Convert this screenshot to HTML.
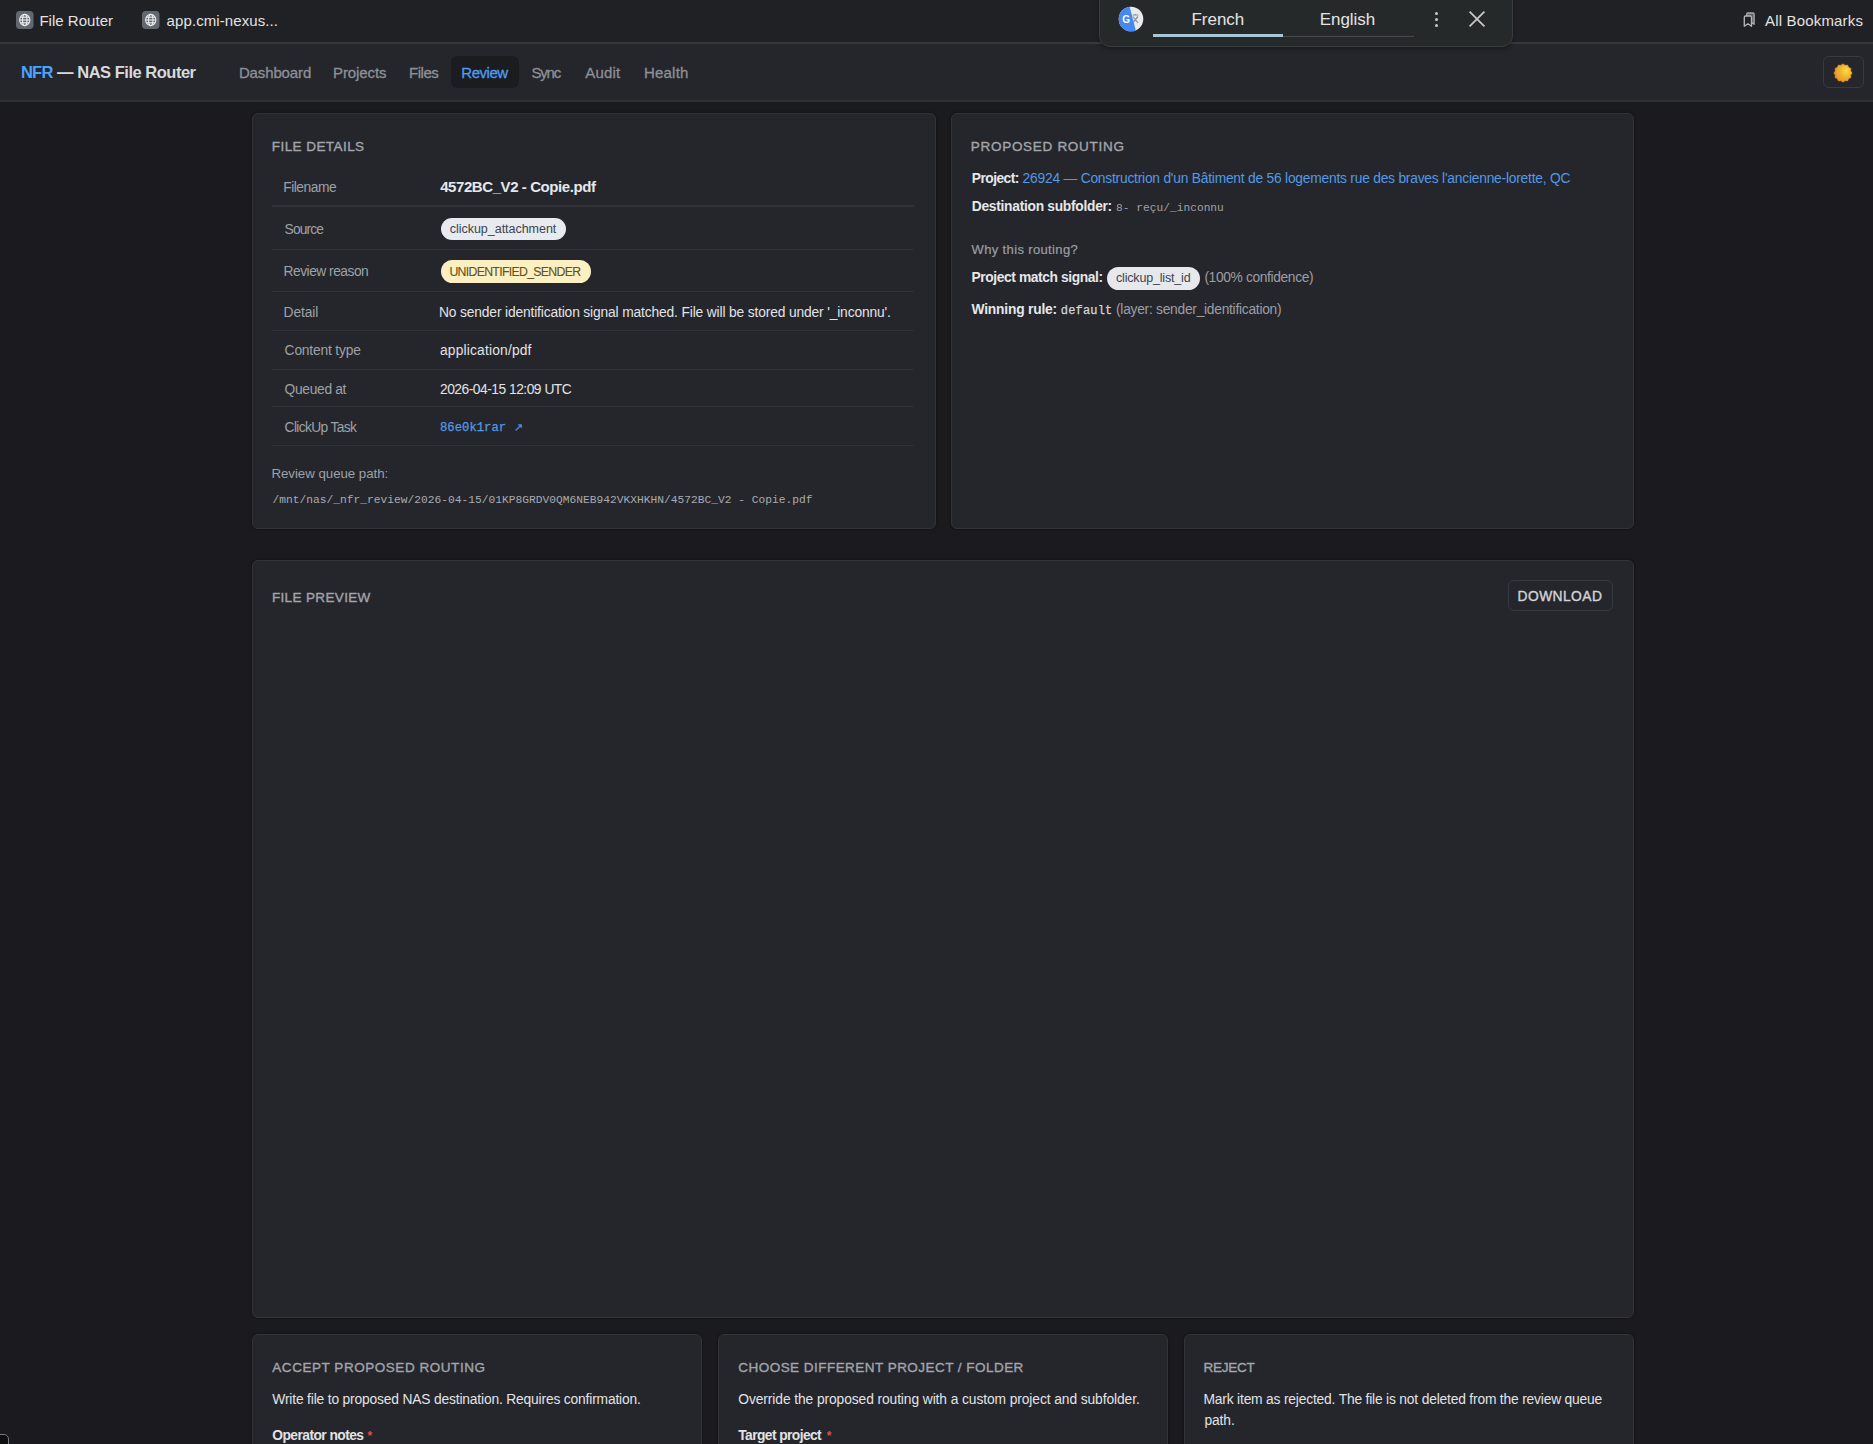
<!DOCTYPE html>
<html><head><meta charset="utf-8">
<style>
*{box-sizing:border-box;margin:0;padding:0}
html,body{width:1873px;height:1444px;overflow:hidden;background:#1b1a1f;font-family:"Liberation Sans",sans-serif;color:#e4e5e8}
.a{position:absolute}
.t{position:absolute;white-space:nowrap}
.card{position:absolute;background:#25262b;border:1.25px solid #323339;border-radius:6px;box-shadow:0 0 3px rgba(0,0,0,.45)}
.sep{position:absolute;left:272px;width:642px;height:1.25px;background:#313238}
.pill{position:absolute;border-radius:12px}
</style></head><body>
<!-- bookmarks bar -->
<div class="a" style="left:0;top:0;width:1873px;height:42px;background:#202124"></div>
<div class="a" style="left:0;top:42px;width:1873px;height:1.6px;background:#38393d"></div>
<svg class="a" style="left:16px;top:11px" width="17.5" height="18" viewBox="0 0 19 18" preserveAspectRatio="none">
  <rect x="0" y="0" width="19" height="18" rx="4" fill="#626870"/>
  <g fill="none" stroke="#f1f1f1" stroke-width="1.1">
    <circle cx="9.5" cy="9" r="5.6"/>
    <ellipse cx="9.5" cy="9" rx="2.4" ry="5.6"/>
    <line x1="3.9" y1="9" x2="15.1" y2="9"/>
    <line x1="4.6" y1="6.2" x2="14.4" y2="6.2"/>
    <line x1="4.6" y1="11.8" x2="14.4" y2="11.8"/>
  </g>
</svg>
<svg class="a" style="left:142.3px;top:11px" width="17.5" height="18" viewBox="0 0 19 18" preserveAspectRatio="none">
  <rect x="0" y="0" width="19" height="18" rx="4" fill="#626870"/>
  <g fill="none" stroke="#f1f1f1" stroke-width="1.1">
    <circle cx="9.5" cy="9" r="5.6"/>
    <ellipse cx="9.5" cy="9" rx="2.4" ry="5.6"/>
    <line x1="3.9" y1="9" x2="15.1" y2="9"/>
    <line x1="4.6" y1="6.2" x2="14.4" y2="6.2"/>
    <line x1="4.6" y1="11.8" x2="14.4" y2="11.8"/>
  </g>
</svg>
<svg class="a" style="left:1742px;top:12px" width="14" height="16" viewBox="0 0 14 16">
  <path d="M4.7 4 V2.2 Q4.7 1 5.9 1 H11 Q12.1 1 12.1 2.2 V12.3 L9.6 10.6" fill="#5f6063" stroke="#a9abae" stroke-width="1.35" stroke-linejoin="round"/>
  <path d="M3.5 4 H8.3 Q9.5 4 9.5 5.2 V14.2 L5.9 11.8 L2.3 14.2 V5.2 Q2.3 4 3.5 4 Z" fill="#202124" stroke="#b3b5b8" stroke-width="1.35" stroke-linejoin="round"/>
</svg>
<!-- nav -->
<div class="a" style="left:0;top:43.6px;width:1873px;height:56.4px;background:#25262b"></div>
<div class="a" style="left:0;top:100px;width:1873px;height:1.8px;background:#2f3035"></div>
<div class="a" style="left:451px;top:56px;width:67.5px;height:32px;border-radius:6px;background:#1b1c20"></div>
<div class="a" style="left:1822.5px;top:56.2px;width:41px;height:31.8px;border-radius:6px;border:1.2px solid #393a40"></div>
<svg class="a" style="left:1833px;top:63px" width="20" height="20" viewBox="0 0 20 20">
  <defs><radialGradient id="sg" cx="0.68" cy="0.38" r="0.75"><stop offset="0" stop-color="#ffd93f"/><stop offset="0.55" stop-color="#e9ad2e"/><stop offset="1" stop-color="#f3862a"/></radialGradient></defs>
  <polygon points="10.00,0.80 12.07,2.27 14.60,2.03 15.66,4.34 17.97,5.40 17.73,7.93 19.20,10.00 17.73,12.07 17.97,14.60 15.66,15.66 14.60,17.97 12.07,17.73 10.00,19.20 7.93,17.73 5.40,17.97 4.34,15.66 2.03,14.60 2.27,12.07 0.80,10.00 2.27,7.93 2.03,5.40 4.34,4.34 5.40,2.03 7.93,2.27" fill="url(#sg)" stroke="#f08a2a" stroke-width="0.5" stroke-linejoin="round"/>
</svg>
<!-- translate popup -->
<div class="a" style="left:1099px;top:-12px;width:414px;height:58.5px;background:#26292a;border:1.3px solid #393b3d;border-radius:11px;box-shadow:0 2px 4px rgba(0,0,0,.35)"></div>
<svg class="a" style="left:1118px;top:6px" width="26" height="26" viewBox="0 0 26 26">
  <defs><clipPath id="gc"><circle cx="13" cy="13" r="12.3"/></clipPath></defs>
  <g clip-path="url(#gc)">
    <rect x="0" y="0" width="26" height="26" fill="#e9eaec"/>
    <path d="M0 0 H11.5 L18.2 26 H0 Z" fill="#4688f2"/>
  </g>
  <text x="8.2" y="17.2" font-family="Liberation Sans" font-weight="bold" font-size="10" fill="#ffffff" text-anchor="middle">G</text>
  <g stroke="#8a8d91" stroke-width="1.2" fill="none"><path d="M14.5 9 H20.5 M17.5 8 V9.5 M15 10.5 L20 17 M20 10.5 L15.5 16"/></g>
</svg>
<div class="a" style="left:1153px;top:34.3px;width:130px;height:3px;background:#a8c7d6"></div>
<div class="a" style="left:1283px;top:35.5px;width:131px;height:1px;background:#47494c"></div>
<div class="a" style="left:1435.3px;top:12.3px;width:3px;height:3px;border-radius:50%;background:#c7c8ca"></div>
<div class="a" style="left:1435.3px;top:18.1px;width:3px;height:3px;border-radius:50%;background:#c7c8ca"></div>
<div class="a" style="left:1435.3px;top:23.7px;width:3px;height:3px;border-radius:50%;background:#c7c8ca"></div>
<svg class="a" style="left:1468px;top:10px" width="18" height="18" viewBox="0 0 18 18">
  <path d="M1.6 1.6 L16.4 16.4 M16.4 1.6 L1.6 16.4" stroke="#c6c7c9" stroke-width="1.8"/>
</svg>
<!-- cards -->
<div class="card" style="left:252px;top:113px;width:684px;height:416px"></div>
<div class="card" style="left:951px;top:113px;width:683px;height:416px"></div>
<div class="card" style="left:252px;top:560px;width:1382px;height:758px"></div>
<div class="card" style="left:252px;top:1334px;width:450px;height:200px"></div>
<div class="card" style="left:718px;top:1334px;width:450px;height:200px"></div>
<div class="card" style="left:1183.5px;top:1334px;width:450.5px;height:200px"></div>
<!-- separators -->
<div class="sep" style="top:205.4px"></div>
<div class="sep" style="top:248.8px"></div>
<div class="sep" style="top:291.2px"></div>
<div class="sep" style="top:330px"></div>
<div class="sep" style="top:368.6px"></div>
<div class="sep" style="top:406.2px"></div>
<div class="sep" style="top:444.8px"></div>
<!-- pills -->
<div class="pill" style="left:441px;top:218.2px;width:125px;height:22px;background:#e7eaee"></div>
<div class="pill" style="left:441px;top:260.3px;width:149.5px;height:22.4px;background:#fcefc2"></div>
<div class="pill" style="left:1106.6px;top:267px;width:93px;height:23.3px;background:#e6e8ec"></div>
<!-- download -->
<div class="a" style="left:1508.3px;top:580.1px;width:104.4px;height:30.8px;border-radius:6px;border:1.3px solid #37383e"></div>
<!-- bottom-left weird corner -->
<div class="a" style="left:-6px;top:1434px;width:15px;height:20px;border-radius:5px;border:1.5px solid #7a7b7e;background:#0e0f11"></div>
<div class="t" style="left:39.40px;top:13.00px;font-size:15px;line-height:15px;color:#e3e3e3;letter-spacing:0.024px">File Router</div>
<div class="t" style="left:166.60px;top:13.00px;font-size:15px;line-height:15px;color:#e3e3e3;letter-spacing:0.088px">app.cmi-nexus...</div>
<div class="t" style="left:1765.00px;top:13.00px;font-size:15px;line-height:15px;color:#e3e3e3;letter-spacing:0.170px">All Bookmarks</div>
<div class="t" style="left:1191.50px;top:11.00px;font-size:17px;line-height:17px;color:#e3e3e3;letter-spacing:-0.031px">French</div>
<div class="t" style="left:1319.70px;top:11.00px;font-size:17px;line-height:17px;color:#e3e3e3;letter-spacing:-0.050px">English</div>
<div class="t" style="left:20.90px;top:64.00px;font-size:16.5px;line-height:16.5px;color:#4aa3ff;letter-spacing:-0.697px;font-weight:bold">NFR</div>
<div class="t" style="left:57.10px;top:64.00px;font-size:16.5px;line-height:16.5px;color:#d8d9dd;letter-spacing:-0.485px;font-weight:bold">— NAS File Router</div>
<div class="t" style="left:238.90px;top:65.00px;font-size:15px;line-height:15px;color:#8d9097;letter-spacing:-0.130px;-webkit-text-stroke:0.3px #8d9097">Dashboard</div>
<div class="t" style="left:333.00px;top:65.00px;font-size:15px;line-height:15px;color:#8d9097;letter-spacing:-0.098px;-webkit-text-stroke:0.3px #8d9097">Projects</div>
<div class="t" style="left:409.00px;top:65.00px;font-size:15px;line-height:15px;color:#8d9097;letter-spacing:-0.467px;-webkit-text-stroke:0.3px #8d9097">Files</div>
<div class="t" style="left:461.30px;top:65.00px;font-size:15px;line-height:15px;color:#4c9df2;letter-spacing:-0.470px;-webkit-text-stroke:0.3px #4c9df2">Review</div>
<div class="t" style="left:531.40px;top:65.00px;font-size:15px;line-height:15px;color:#8d9097;letter-spacing:-1.182px;-webkit-text-stroke:0.3px #8d9097">Sync</div>
<div class="t" style="left:585.20px;top:65.00px;font-size:15px;line-height:15px;color:#8d9097;letter-spacing:0.195px;-webkit-text-stroke:0.3px #8d9097">Audit</div>
<div class="t" style="left:644.00px;top:65.00px;font-size:15px;line-height:15px;color:#8d9097;letter-spacing:0.197px;-webkit-text-stroke:0.3px #8d9097">Health</div>
<div class="t" style="left:271.80px;top:140.00px;font-size:13.5px;line-height:13.5px;color:#a2a5ab;letter-spacing:0.434px;-webkit-text-stroke:0.35px #a2a5ab">FILE DETAILS</div>
<div class="t" style="left:283.30px;top:181.00px;font-size:13.8px;line-height:13.8px;color:#9ea1a7;letter-spacing:-0.496px">Filename</div>
<div class="t" style="left:440.20px;top:179.00px;font-size:15px;line-height:15px;color:#e6e7ea;letter-spacing:-0.426px;font-weight:bold">4572BC_V2 - Copie.pdf</div>
<div class="t" style="left:284.60px;top:223.00px;font-size:13.8px;line-height:13.8px;color:#9ea1a7;letter-spacing:-0.888px">Source</div>
<div class="t" style="left:449.80px;top:223.00px;font-size:12.5px;line-height:12.5px;color:#3d4350;letter-spacing:-0.031px">clickup_attachment</div>
<div class="t" style="left:283.60px;top:265.00px;font-size:13.8px;line-height:13.8px;color:#9ea1a7;letter-spacing:-0.507px">Review reason</div>
<div class="t" style="left:449.40px;top:266.00px;font-size:12.3px;line-height:12.3px;color:#645316;letter-spacing:-0.694px;-webkit-text-stroke:0.1px #645316">UNIDENTIFIED_SENDER</div>
<div class="t" style="left:283.60px;top:306.00px;font-size:13.8px;line-height:13.8px;color:#9ea1a7;letter-spacing:-0.122px">Detail</div>
<div class="t" style="left:439.00px;top:306.00px;font-size:13.8px;line-height:13.8px;color:#e2e3e6;letter-spacing:-0.147px">No sender identification signal matched. File will be stored under &#x27;_inconnu&#x27;.</div>
<div class="t" style="left:284.60px;top:344.00px;font-size:13.8px;line-height:13.8px;color:#9ea1a7;letter-spacing:-0.178px">Content type</div>
<div class="t" style="left:440.00px;top:344.00px;font-size:13.8px;line-height:13.8px;color:#e2e3e6;letter-spacing:0.175px">application/pdf</div>
<div class="t" style="left:284.60px;top:383.00px;font-size:13.8px;line-height:13.8px;color:#9ea1a7;letter-spacing:-0.325px">Queued at</div>
<div class="t" style="left:440.00px;top:383.00px;font-size:13.8px;line-height:13.8px;color:#e2e3e6;letter-spacing:-0.493px">2026-04-15 12:09 UTC</div>
<div class="t" style="left:284.60px;top:421.00px;font-size:13.8px;line-height:13.8px;color:#9ea1a7;letter-spacing:-0.648px">ClickUp Task</div>
<div class="t" style="left:440.00px;top:422.00px;font-size:12.2px;line-height:12.2px;color:#5299e6;letter-spacing:0.036px;font-family:'Liberation Mono',monospace;-webkit-text-stroke:0.25px #5299e6">86e0k1rar</div>
<div class="t" style="left:514.00px;top:422.00px;font-size:11px;line-height:11px;color:#5299e6;letter-spacing:0.000px;-webkit-text-stroke:0.2px #5299e6">↗</div>
<div class="t" style="left:271.40px;top:467.00px;font-size:13.3px;line-height:13.3px;color:#9ea1a7;letter-spacing:-0.038px">Review queue path:</div>
<div class="t" style="left:272.40px;top:495.00px;font-size:11.25px;line-height:11.25px;color:#a9abb0;letter-spacing:0.001px;font-family:'Liberation Mono',monospace">/mnt/nas/_nfr_review/2026-04-15/01KP8GRDV0QM6NEB942VKXHKHN/4572BC_V2 - Copie.pdf</div>
<div class="t" style="left:970.80px;top:140.00px;font-size:13.5px;line-height:13.5px;color:#a2a5ab;letter-spacing:0.706px;-webkit-text-stroke:0.35px #a2a5ab">PROPOSED ROUTING</div>
<div class="t" style="left:971.80px;top:172.00px;font-size:13.8px;line-height:13.8px;color:#e6e7ea;letter-spacing:-0.539px;font-weight:bold">Project:</div>
<div class="t" style="left:1022.60px;top:172.00px;font-size:13.8px;line-height:13.8px;color:#5299e6;letter-spacing:-0.223px">26924 — Constructrion d&#x27;un Bâtiment de 56 logements rue des braves l&#x27;ancienne-lorette, QC</div>
<div class="t" style="left:971.80px;top:200.00px;font-size:13.8px;line-height:13.8px;color:#e6e7ea;letter-spacing:-0.286px;font-weight:bold">Destination subfolder:</div>
<div class="t" style="left:1116.10px;top:203.00px;font-size:11.2px;line-height:11.2px;color:#9fa1a7;letter-spacing:0.020px;font-family:'Liberation Mono',monospace">8- reçu/_inconnu</div>
<div class="t" style="left:971.50px;top:243.00px;font-size:13px;line-height:13px;color:#9b9ea4;letter-spacing:0.362px;-webkit-text-stroke:0.2px #9b9ea4">Why this routing?</div>
<div class="t" style="left:971.50px;top:271.00px;font-size:13.8px;line-height:13.8px;color:#e6e7ea;letter-spacing:-0.397px;font-weight:bold">Project match signal:</div>
<div class="t" style="left:1116.00px;top:272.00px;font-size:12.5px;line-height:12.5px;color:#3d4350;letter-spacing:-0.176px">clickup_list_id</div>
<div class="t" style="left:1204.40px;top:271.00px;font-size:13.8px;line-height:13.8px;color:#9b9ea4;letter-spacing:-0.366px">(100% confidence)</div>
<div class="t" style="left:971.50px;top:303.00px;font-size:13.8px;line-height:13.8px;color:#e6e7ea;letter-spacing:-0.201px;font-weight:bold">Winning rule:</div>
<div class="t" style="left:1060.80px;top:305.00px;font-size:12px;line-height:12px;color:#d4d6da;letter-spacing:0.182px;font-family:'Liberation Mono',monospace;-webkit-text-stroke:0.25px #d4d6da">default</div>
<div class="t" style="left:1116.00px;top:303.00px;font-size:13.8px;line-height:13.8px;color:#9b9ea4;letter-spacing:-0.266px">(layer: sender_identification)</div>
<div class="t" style="left:271.90px;top:591.00px;font-size:13.5px;line-height:13.5px;color:#a2a5ab;letter-spacing:0.357px;-webkit-text-stroke:0.35px #a2a5ab">FILE PREVIEW</div>
<div class="t" style="left:1517.60px;top:590.00px;font-size:13.8px;line-height:13.8px;color:#d0d3d7;letter-spacing:0.430px;-webkit-text-stroke:0.4px #d0d3d7">DOWNLOAD</div>
<div class="t" style="left:272.30px;top:1361.00px;font-size:13.5px;line-height:13.5px;color:#a2a5ab;letter-spacing:0.540px;-webkit-text-stroke:0.35px #a2a5ab">ACCEPT PROPOSED ROUTING</div>
<div class="t" style="left:272.30px;top:1393.00px;font-size:13.8px;line-height:13.8px;color:#e2e3e6;letter-spacing:-0.165px">Write file to proposed NAS destination. Requires confirmation.</div>
<div class="t" style="left:272.30px;top:1429.00px;font-size:13.8px;line-height:13.8px;color:#e2e3e6;letter-spacing:-0.556px;font-weight:bold">Operator notes</div>
<div class="t" style="left:367.60px;top:1430.00px;font-size:12px;line-height:12px;color:#e5484d;letter-spacing:0.000px;font-weight:bold">*</div>
<div class="t" style="left:738.30px;top:1361.00px;font-size:13.5px;line-height:13.5px;color:#a2a5ab;letter-spacing:0.462px;-webkit-text-stroke:0.35px #a2a5ab">CHOOSE DIFFERENT PROJECT / FOLDER</div>
<div class="t" style="left:738.30px;top:1393.00px;font-size:13.8px;line-height:13.8px;color:#e2e3e6;letter-spacing:-0.089px">Override the proposed routing with a custom project and subfolder.</div>
<div class="t" style="left:738.30px;top:1429.00px;font-size:13.8px;line-height:13.8px;color:#e2e3e6;letter-spacing:-0.583px;font-weight:bold">Target project</div>
<div class="t" style="left:826.70px;top:1430.00px;font-size:12px;line-height:12px;color:#e5484d;letter-spacing:0.000px;font-weight:bold">*</div>
<div class="t" style="left:1203.50px;top:1361.00px;font-size:13.5px;line-height:13.5px;color:#a2a5ab;letter-spacing:-0.251px;-webkit-text-stroke:0.35px #a2a5ab">REJECT</div>
<div class="t" style="left:1203.50px;top:1393.00px;font-size:13.8px;line-height:13.8px;color:#e2e3e6;letter-spacing:-0.180px">Mark item as rejected. The file is not deleted from the review queue</div>
<div class="t" style="left:1204.50px;top:1414.00px;font-size:13.8px;line-height:13.8px;color:#e2e3e6;letter-spacing:-0.113px">path.</div>
</body></html>
